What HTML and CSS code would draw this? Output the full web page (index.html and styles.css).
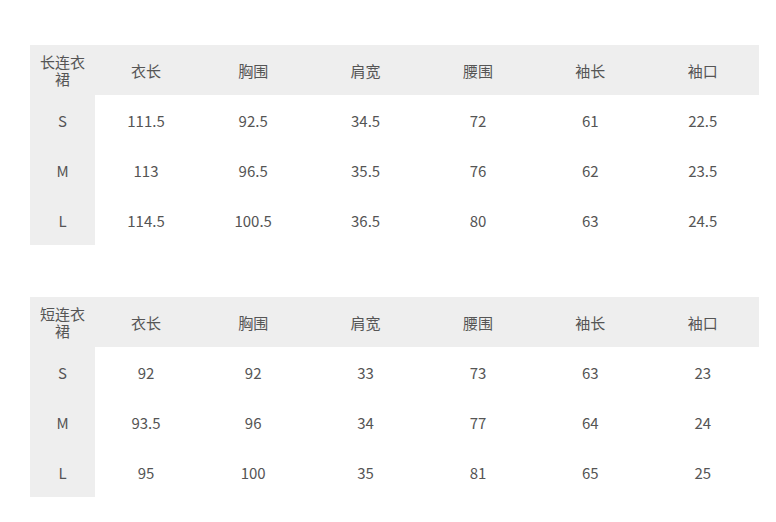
FILE: index.html
```html
<!DOCTYPE html>
<html lang="zh-CN">
<head>
<meta charset="utf-8">
<link rel="stylesheet" href="styles.css">
</head>
<body>
<div class="page">
  <table class="size">
    <colgroup><col class="c0"><col class="c1"><col class="cn"><col class="cn"><col class="cn"><col class="cn"><col class="cn"></colgroup>
    <tr class="head"><th class="two">长连衣<br>裙</th><th>衣长</th><th>胸围</th><th>肩宽</th><th>腰围</th><th>袖长</th><th>袖口</th></tr>
    <tr><th>S</th><td>111.5</td><td>92.5</td><td>34.5</td><td>72</td><td>61</td><td>22.5</td></tr>
    <tr><th>M</th><td>113</td><td>96.5</td><td>35.5</td><td>76</td><td>62</td><td>23.5</td></tr>
    <tr><th>L</th><td>114.5</td><td>100.5</td><td>36.5</td><td>80</td><td>63</td><td>24.5</td></tr>
  </table>
  <table class="size">
    <colgroup><col class="c0"><col class="c1"><col class="cn"><col class="cn"><col class="cn"><col class="cn"><col class="cn"></colgroup>
    <tr class="head"><th class="two">短连衣<br>裙</th><th>衣长</th><th>胸围</th><th>肩宽</th><th>腰围</th><th>袖长</th><th>袖口</th></tr>
    <tr><th>S</th><td>92</td><td>92</td><td>33</td><td>73</td><td>63</td><td>23</td></tr>
    <tr><th>M</th><td>93.5</td><td>96</td><td>34</td><td>77</td><td>64</td><td>24</td></tr>
    <tr><th>L</th><td>95</td><td>100</td><td>35</td><td>81</td><td>65</td><td>25</td></tr>
  </table>
</div>
</body>
</html>
```
FILE: styles.css
```css
html, body {
  margin: 0;
  padding: 0;
  background: #fff;
}
.page {
  padding: 45px 0 0 30px;
  display: flex;
  flex-direction: column;
  gap: 52px;
  font-family: "Microsoft YaHei", "Noto Sans CJK SC", "Noto Sans", sans-serif;
  font-size: 15px;
  color: #555;
}
.size {
  border-collapse: collapse;
  border-spacing: 0;
  table-layout: fixed;
  width: 729px;
}
.c0 { width: 65px; }
.c1 { width: 102px; }
.cn { width: 112.4px; }
.size th, .size td {
  height: 50px;
  padding: 0;
  text-align: center;
  vertical-align: middle;
  font-weight: normal;
  line-height: 17px;
}
.size tr > th:first-child {
  background: #eeeeee;
}
.size tr.head > * {
  background: #eeeeee;
}
.size tr.head th.two {
  line-height: 17px;
}
```
